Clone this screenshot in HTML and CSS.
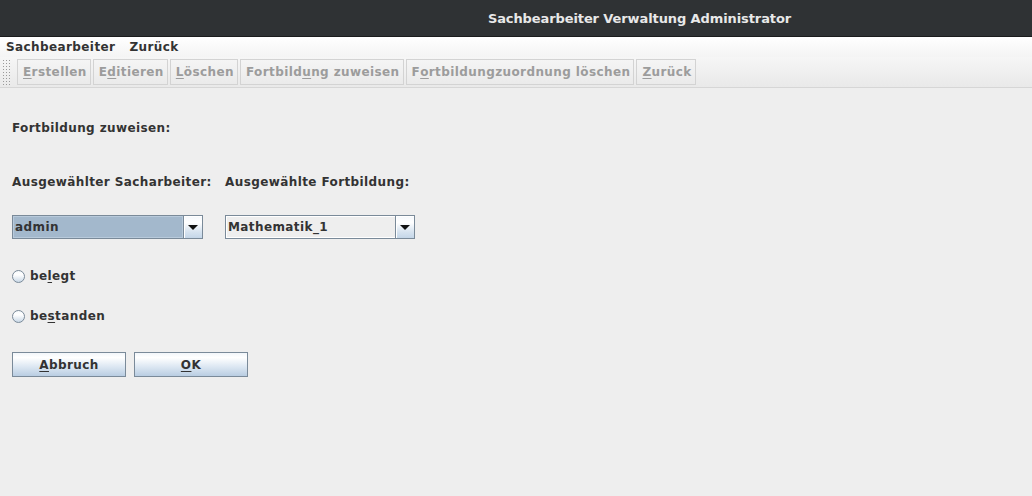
FILE: index.html
```html
<!DOCTYPE html>
<html>
<head>
<meta charset="utf-8">
<link rel="stylesheet" href="styles.css">
</head>
<body>
<div class="titlebar"><span class="title">Sachbearbeiter Verwaltung Administrator</span></div>
<div class="menubar">
  <span class="menu">Sachbearbeiter</span>
  <span class="menu">Zurück</span>
</div>
<div class="toolbar">
  <div class="grip"></div>
  <div class="tbtn"><u>E</u>rstellen</div>
  <div class="tbtn">E<u>d</u>itieren</div>
  <div class="tbtn"><u>L</u>öschen</div>
  <div class="tbtn">Fortbild<u>u</u>ng zuweisen</div>
  <div class="tbtn">F<u>o</u>rtbildungzuordnung löschen</div>
  <div class="tbtn"><u>Z</u>urück</div>
</div>
<div class="content">
  <div class="heading">Fortbildung zuweisen:</div>
  <div class="labels">
    <div class="lbl lbl1">Ausgewählter Sacharbeiter:</div>
    <div class="lbl">Ausgewählte Fortbildung:</div>
  </div>
  <div class="combos">
    <div class="combo combo1">
      <div class="combo-val sel">admin</div>
      <div class="combo-btn"><span class="tri"></span></div>
    </div>
    <div class="combo combo2">
      <div class="combo-val">Mathematik_1</div>
      <div class="combo-btn"><span class="tri"></span></div>
    </div>
  </div>
  <div class="radio r1"><span class="circle"></span><span>be<u>l</u>egt</span></div>
  <div class="radio r2"><span class="circle"></span><span>be<u>s</u>tanden</span></div>
  <div class="buttons">
    <div class="btn"><u>A</u>bbruch</div>
    <div class="btn"><u>O</u>K</div>
  </div>
</div>
</body>
</html>
```

FILE: styles.css
```css
* { box-sizing: border-box; }
html, body {
  margin: 0;
  padding: 0;
  width: 1032px;
  height: 496px;
  overflow: hidden;
  background: #eeeeee;
  font-family: "DejaVu Sans", sans-serif;
  font-weight: bold;
  font-size: 12px;
  letter-spacing: 0.4px;
  color: #333333;
}
u { text-decoration: underline; text-underline-offset: 2px; }

.titlebar {
  height: 37px;
  background: #2f3234;
  border-bottom: 1px solid #1b1c1d;
  display: flex;
  align-items: center;
  justify-content: center;
  padding-left: 247px;
}
.title {
  color: #e8e8e8;
  font-size: 13px;
  font-weight: bold;
  font-family: "DejaVu Sans", sans-serif;
  letter-spacing: -0.1px;
}

.menubar {
  height: 20px;
  background: linear-gradient(#ffffff, #f4f4f4);
  display: flex;
  align-items: center;
  padding-left: 6px;
  gap: 14px;
  font-size: 12px;
  color: #333333;
}

.toolbar {
  height: 31px;
  background: linear-gradient(#f6f6f6, #e9e9e9);
  border-bottom: 1px solid #d6d6d6;
  display: flex;
  align-items: center;
  padding-left: 2px;
  gap: 2px;
}
.grip {
  width: 9px;
  height: 26px;
  margin-right: 4px;
  background-image: radial-gradient(#9a9a9a 0.7px, transparent 0.8px);
  background-size: 3px 3px;
  background-position: 0 0;
}
.tbtn {
  height: 26px;
  border: 1px solid #d3d3d3;
  padding: 0 3px 0 5px;
  display: flex;
  align-items: center;
  color: #9c9c9c;
  font-size: 12px;
}

.content {
  padding: 0 12px;
}
.heading {
  margin-top: 32px;
  height: 16px;
  line-height: 16px;
}
.labels {
  margin-top: 38px;
  display: flex;
  height: 16px;
  line-height: 16px;
}
.lbl1 { width: 213px; }

.combos {
  margin-top: 25px;
  display: flex;
  gap: 22px;
}
.combo {
  height: 24px;
  width: 191px;
  border: 1px solid #7a8a99;
  display: flex;
  background: #eeeeee;
}
.combo2 { width: 190px; }
.combo-val {
  flex: 1;
  display: flex;
  align-items: center;
  padding-left: 1px;
  color: #333333;
  border: 1px solid #ffffff;
  border-right: none;
}
.combo-val.sel {
  background: #a3b8cc;
  border: 1px solid #b8cadb;
}
.combo-btn {
  width: 19px;
  border-left: 1px solid #7a8a99;
  background: linear-gradient(#f4f8fc, #ffffff 30%, #d8e4f0 70%, #c4d6e8);
  display: flex;
  align-items: center;
  justify-content: center;
  box-shadow: inset 1px 1px 0 #ffffff;
}
.tri {
  width: 0;
  height: 0;
  border-left: 5px solid transparent;
  border-right: 5px solid transparent;
  border-top: 5px solid #111111;
  margin-top: 1px;
}

.radio {
  display: flex;
  align-items: center;
  gap: 5px;
  height: 16px;
  font-size: 12px;
}
.r1 { margin-top: 29px; }
.r2 { margin-top: 24px; }
.circle {
  width: 13px;
  height: 13px;
  border-radius: 50%;
  border: 1px solid #7a8a99;
  background: linear-gradient(#f6f9fc, #ffffff 35%, #c9d8e7);
}

.buttons {
  margin-top: 28px;
  display: flex;
  gap: 8px;
}
.btn {
  width: 114px;
  height: 25px;
  border: 1px solid #7a8a99;
  background: linear-gradient(#f2f6fa, #ffffff 20%, #dce7f2 60%, #b9cde2);
  display: flex;
  align-items: center;
  justify-content: center;
  color: #333333;
  font-size: 12px;
}
```
